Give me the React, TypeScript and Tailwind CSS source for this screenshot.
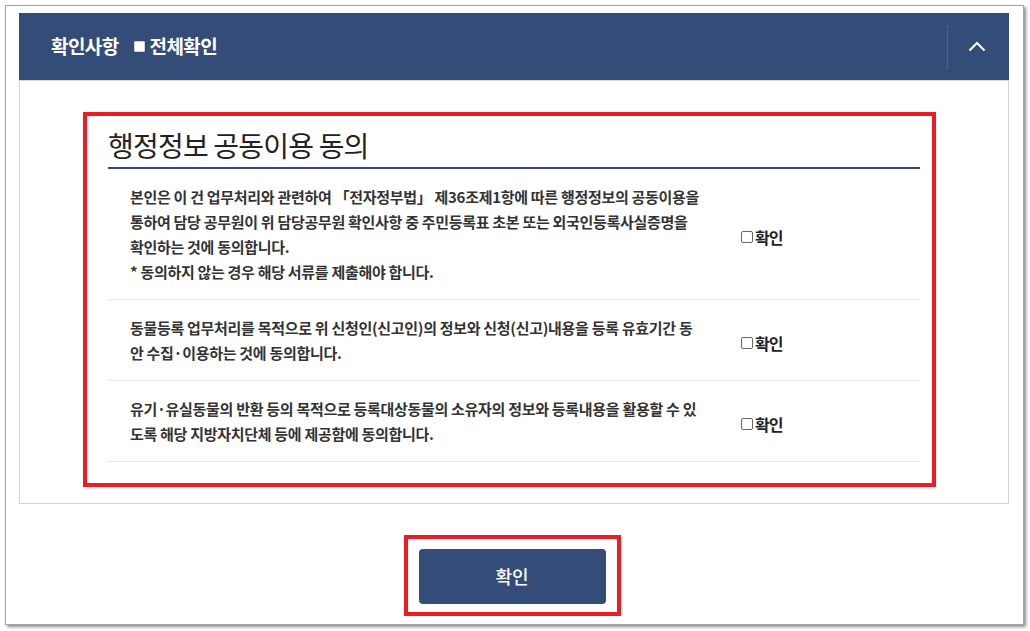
const font = { fontFamily: '"Noto Sans CJK KR", "Noto Sans", sans-serif' };

const rows = [
  {
    lines: [
      "본인은 이 건 업무처리와 관련하여 「전자정부법」 제36조제1항에 따른 행정정보의 공동이용을",
      "통하여 담당 공무원이 위 담당공무원 확인사항 중 주민등록표 초본 또는 외국인등록사실증명을",
      "확인하는 것에 동의합니다.",
      "* 동의하지 않는 경우 해당 서류를 제출해야 합니다.",
    ],
  },
  {
    lines: [
      "동물등록 업무처리를 목적으로 위 신청인(신고인)의 정보와 신청(신고)내용을 등록 유효기간 동",
      "안 수집·이용하는 것에 동의합니다.",
    ],
  },
  {
    lines: [
      "유기·유실동물의 반환 등의 목적으로 등록대상동물의 소유자의 정보와 등록내용을 활용할 수 있",
      "도록 해당 지방자치단체 등에 제공함에 동의합니다.",
    ],
  },
];

const ConsentRow = ({ lines }: { lines: string[] }) => (
  <div className="flex items-center border-b border-[#e9e9e9] py-[15px]">
    <div className="w-[633px] shrink-0 pl-[22px] text-[15px] leading-[25px] font-bold tracking-[-0.3px] text-[#333] whitespace-nowrap">
      {lines.map((line, i) => (
        <div key={i}>{line}</div>
      ))}
    </div>
    <label className="flex items-center pt-[5px] text-[16px] font-bold tracking-[-1px] text-[#222]">
      <span className="w-[12px] h-[12px] border border-[#666] rounded-[2px] bg-white mr-[2px]"></span>
      확인
    </label>
  </div>
);

export default function App() {
  return (
    <div className="w-[1030px] h-[631px] bg-white pt-[5px] pl-[5px]" style={font}>
      <div className="w-[1019px] h-[620px] bg-white border border-[#a3a3a3] shadow-[2px_2px_3px_rgba(0,0,0,0.45)] pt-[7px] pl-[13px] pr-[14px]">
        {/* header */}
        <div className="h-[67px] bg-[#344c78] flex items-center">
          <div className="flex-1 flex items-center pl-[32px] text-white text-[19px] font-bold tracking-[-0.6px]">
            <span>확인사항</span>
            <span className="ml-[15px] w-[11px] h-[11px] bg-white border border-[#d0d0d0] rounded-[1px]"></span>
            <span className="ml-[5px]">전체확인</span>
          </div>
          <div className="w-[62px] h-[44px] border-l border-[#4c6391] flex items-center justify-center">
            <svg width="18" height="11" viewBox="0 0 18 11" className="-ml-[3px]">
              <polyline points="1.5,9.5 9,2 16.5,9.5" fill="none" stroke="white" strokeWidth="2" />
            </svg>
          </div>
        </div>

        {/* body */}
        <div className="h-[424px] border border-t-[#d6d6d6] border-[#d3d3d3] pt-[31px] pl-[63px]">
          <div className="w-[853px] border-4 border-[#ed1c24] pl-[21px] pr-[12px] pb-[21px]">
            <div className="pt-[12px] pb-[5px] leading-[34px] text-[28px] tracking-[-0.8px] text-[#222] border-b-2 border-[#30487a]">
              행정정보 공동이용 동의
            </div>
            {rows.map((row, i) => (
              <ConsentRow key={i} lines={row.lines} />
            ))}
          </div>
        </div>

        {/* button */}
        <div className="mt-[31px] flex justify-center pr-[4px]">
          <div className="border-4 border-[#ed1c24] px-[11px] pt-[10px] pb-[8px]">
            <button className="w-[187px] h-[55px] rounded-[4px] bg-[#344c78] text-white text-[18px] font-medium">
              확인
            </button>
          </div>
        </div>
      </div>
    </div>
  );
}
